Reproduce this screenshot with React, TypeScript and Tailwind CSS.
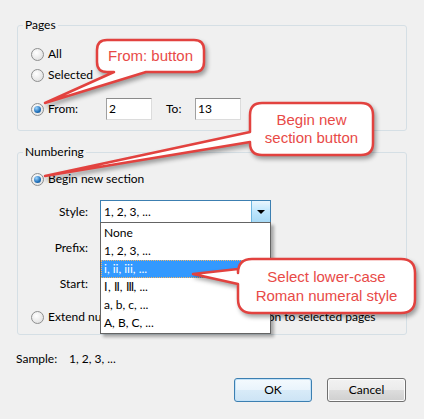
import type { ReactNode } from "react"

const ui = { fontFamily: 'Lato, "Segoe UI", "Noto Sans", sans-serif' }
const callFont = { fontFamily: '"Liberation Sans", Arial, sans-serif' }

function Radio({ checked, children }: { checked?: boolean; children: ReactNode }) {
  return (
    <div className="flex items-center h-[16px]">
      <span className="w-[13px] h-[13px] rounded-full border border-[#8e8f8f] bg-[radial-gradient(circle_at_40%_35%,#ffffff,#d9d9d9)] flex items-center justify-center shrink-0">
        {checked && (
          <span className="w-[7px] h-[7px] rounded-full bg-[radial-gradient(circle_at_35%_30%,#9fd6ff,#1f6fb8_60%,#0d4a87)]" />
        )}
      </span>
      <span className="ml-[4px] whitespace-nowrap">{children}</span>
    </div>
  )
}

function TextBox({ value, className }: { value: string; className: string }) {
  return (
    <div
      className={`h-[22px] bg-white border border-t-[#8a8a8a] border-l-[#a0a0a0] border-r-[#dcdcdc] border-b-[#dcdcdc] px-[2px] leading-[20px] ${className}`}
    >
      {value}
    </div>
  )
}

function GroupBox({ title, children, className }: { title: string; children: ReactNode; className?: string }) {
  return (
    <fieldset className={`mx-[17px] border border-[#d5dfe5] rounded-[3px] px-0 ${className ?? ""}`}>
      <legend className="ml-[5px] px-[2px] leading-[16px]">{title}</legend>
      <div className="pl-[13px]">{children}</div>
    </fieldset>
  )
}

const styles = ["None", "1, 2, 3, ...", "i, ii, iii, ...", "Ⅰ, Ⅱ, Ⅲ, ...", "a, b, c, ...", "A, B, C, ..."]

export default function App() {
  return (
    <div className="relative w-[424px] h-[419px] overflow-hidden bg-[#f0f0f0] text-[12px] text-black pt-[17px]" style={ui}>
      <GroupBox title="Pages" className="pb-[10px]">
        <div className="mt-[13px]">
          <Radio>All</Radio>
        </div>
        <div className="mt-[5px]">
          <Radio>Selected</Radio>
        </div>
        <div className="mt-[15px] flex items-center h-[22px]">
          <div className="w-[75px]">
            <Radio checked>From:</Radio>
          </div>
          <TextBox value="2" className="w-[46px]" />
          <span className="ml-[14px] w-[29px]">To:</span>
          <TextBox value="13" className="w-[46px]" />
        </div>
      </GroupBox>

      <GroupBox title="Numbering" className="mt-[13px] pb-[9px]">
        <div className="mt-[11px]">
          <Radio checked>Begin new section</Radio>
        </div>
        <div className="mt-[13px] flex items-center h-[23px]">
          <span className="w-[57px] text-right">Style:</span>
          <div className="ml-[12px] w-[171px] h-[23px] border border-[#3c7fb1] bg-white flex items-center">
            <span className="flex-1 pl-[3px]">1, 2, 3, ...</span>
            <span className="w-[19px] h-full bg-[linear-gradient(#eaf6fd,#bee6fd_50%,#a7d9f5)] border-l border-[#6eb6e0] flex items-center justify-center">
              <span className="w-0 h-0 border-l-[4px] border-r-[4px] border-t-[4px] border-l-transparent border-r-transparent border-t-black" />
            </span>
          </div>
        </div>
        <div className="mt-[14px] flex items-center h-[22px]">
          <span className="w-[57px] text-right">Prefix:</span>
          <TextBox value="" className="ml-[12px] w-[120px]" />
        </div>
        <div className="mt-[14px] flex items-center h-[22px]">
          <span className="w-[57px] text-right">Start:</span>
          <TextBox value="" className="ml-[12px] w-[120px]" />
        </div>
        <div className="mt-[14px]">
          <Radio>Extend numbering used in preceding section to selected pages</Radio>
        </div>
      </GroupBox>

      <div className="mt-[16px] pl-[16px] flex leading-[16px]">
        <span className="w-[53px]">Sample:</span>
        <span>1, 2, 3, ...</span>
      </div>

      <div className="mt-[11px] flex justify-end gap-[15px] pr-[18px]">
        <button className="w-[78px] h-[24px] rounded-[3px] border border-[#3c7fb1] bg-[linear-gradient(#f4fafe,#e9f4fc_50%,#d8ebf8_51%,#cde4f5)] shadow-[inset_0_0_0_1px_#c3e2f8]">
          OK
        </button>
        <button className="w-[79px] h-[24px] rounded-[3px] border border-[#707070] bg-[linear-gradient(#f2f2f2,#ebebeb_50%,#dddddd_51%,#cfcfcf)] shadow-[inset_0_0_0_1px_#fcfcfc]">
          Cancel
        </button>
      </div>

      {/* open dropdown list */}
      <div className="absolute left-[100px] top-[222px] w-[171px] border border-[#646464] bg-white py-[1px] shadow-[3px_3px_3px_rgba(0,0,0,0.3)]">
        {styles.map((s, i) => (
          <div
            key={s}
            className={
              i === 2
                ? "h-[18px] leading-[16px] pl-[2px] bg-[#3399ff] text-white border border-dotted border-[#f1b56b]"
                : "h-[18px] leading-[18px] pl-[3px]"
            }
          >
            {s}
          </div>
        ))}
      </div>

      {/* callouts */}
      <svg className="absolute inset-0 drop-shadow-[2px_3px_2px_rgba(0,0,0,0.35)]" width="424" height="419">
        <g fill="#ffffff" stroke="#e2423f" strokeWidth="2.5" strokeLinejoin="round">
          <path d="M107,40 H194 Q204,40 204,50 V62 Q204,72 194,72 H146 L45,103 L114,72 H107 Q97,72 97,62 V50 Q97,40 107,40 Z" />
          <path d="M262,103 H361 Q373,103 373,115 V143 Q373,155 361,155 H262 Q250,155 250,143 V142 L45,176 L250,132 V115 Q250,103 262,103 Z" />
          <path d="M252,259 H401 Q415,259 415,273 V299 Q415,313 401,313 H252 Q238,313 238,299 V284 L193,274 L238,269 V273 Q238,259 252,259 Z" />
        </g>
      </svg>
      <div className="absolute left-[97px] top-[40px] w-[107px] h-[32px] flex items-center justify-center text-[15px] text-[#e84a47]" style={callFont}>
        From: button
      </div>
      <div className="absolute left-[250px] top-[103px] w-[123px] h-[52px] flex flex-col items-center justify-center text-[15px] leading-[18px] text-[#e84a47]" style={callFont}>
        <span>Begin new</span>
        <span>section button</span>
      </div>
      <div className="absolute left-[238px] top-[259px] w-[177px] h-[54px] flex flex-col items-center justify-center text-[15px] leading-[19px] text-[#e84a47]" style={callFont}>
        <span>Select lower-case</span>
        <span>Roman numeral style</span>
      </div>
    </div>
  )
}
